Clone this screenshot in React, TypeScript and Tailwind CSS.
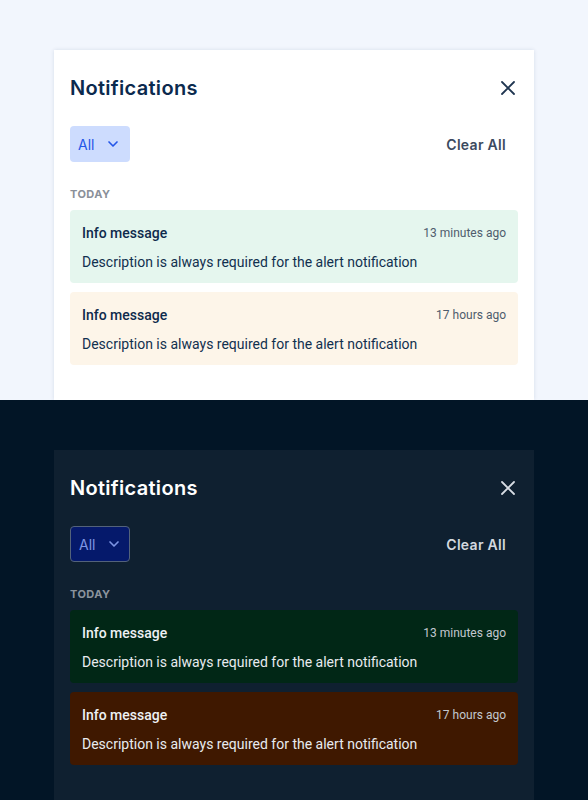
import { ChevronDown } from 'lucide-react';

type Theme = 'light' | 'dark';

const notifications = [
  { title: 'Info message', time: '13 minutes ago', tone: 'success' },
  { title: 'Info message', time: '17 hours ago', tone: 'warning' },
];

function CloseIcon() {
  return (
    <svg width="14" height="14" viewBox="0 0 14 14" fill="none" stroke="currentColor" strokeWidth="1.8" strokeLinecap="round">
      <path d="M1 1L13 13M13 1L1 13" />
    </svg>
  );
}

function Panel({ theme }: { theme: Theme }) {
  const dark = theme === 'dark';
  return (
    <div
      className={
        dark
          ? 'h-[350px] w-[480px] bg-[#0f2030] px-4'
          : 'h-[350px] w-[480px] bg-white px-4 shadow-[0_0_4px_rgba(15,40,80,0.12)]'
      }
    >
      {/* Header */}
      <div className="flex h-[76px] items-center justify-between">
        <h2
          className={
            dark
              ? 'text-[20px] font-semibold tracking-[0.3px] text-white'
              : 'text-[20px] font-semibold tracking-[0.3px] text-[#0b2a4e]'
          }
          style={{ fontFamily: 'Inter, "Open Sans", sans-serif' }}
        >
          Notifications
        </h2>
        <button className={dark ? 'mr-[3px] text-[#d8dde4]' : 'mr-[3px] text-[#1f3550]'}>
          <CloseIcon />
        </button>
      </div>

      {/* Filter row */}
      <div className="flex h-[36px] items-center justify-between">
        <button
          className={
            dark
              ? 'flex h-[36px] w-[60px] items-center gap-[11px] rounded-[4px] border border-[#53627a] bg-[#05196b] pl-[8px] text-[14px] text-[#7d95e4]'
              : 'flex h-[36px] w-[60px] items-center gap-[11px] rounded-[4px] bg-[#cddcfe] pl-[8px] text-[14px] text-[#2456e8]'
          }
          style={{ fontFamily: 'Inter, sans-serif' }}
        >
          <span>All</span>
          <ChevronDown className="h-4 w-4" strokeWidth={2.5} />
        </button>
        <button
          className={
            dark
              ? 'mr-[12px] text-[14px] font-semibold tracking-[0.3px] text-[#d3d8df]'
              : 'mr-[12px] text-[14px] font-semibold tracking-[0.3px] text-[#3b4a60]'
          }
          style={{ fontFamily: 'Inter, sans-serif' }}
        >
          Clear All
        </button>
      </div>

      {/* Section label */}
      <div
        className={
          dark
            ? 'mt-[24px] text-[11px] font-bold tracking-[0.4px] text-[#8b939d]'
            : 'mt-[24px] text-[11px] font-bold tracking-[0.4px] text-[#8a9099]'
        }
        style={{ fontFamily: 'Inter, sans-serif' }}
      >
        TODAY
      </div>

      {/* Notifications */}
      <div className="mt-[7px] flex flex-col gap-[9px]" style={{ fontFamily: 'Roboto, sans-serif' }}>
        {notifications.map((n, i) => {
          const bg =
            n.tone === 'success'
              ? dark
                ? 'bg-[#012716]'
                : 'bg-[#e5f6ee]'
              : dark
                ? 'bg-[#3f1800]'
                : 'bg-[#fdf5e9]';
          return (
            <div key={i} className={`rounded-[4px] px-3 pb-[11px] pt-[13px] ${bg}`}>
              <div className="flex items-center justify-between">
                <span
                  className={
                    dark
                      ? 'text-[14px] font-medium leading-5 text-[#eef1f4]'
                      : 'text-[14px] font-medium leading-5 text-[#0e2a4c]'
                  }
                >
                  {n.title}
                </span>
                <span
                  className={
                    dark ? 'text-[12px] leading-5 text-[#c3c8cf]' : 'text-[12px] leading-5 text-[#4f5c6d]'
                  }
                >
                  {n.time}
                </span>
              </div>
              <p
                className={
                  dark
                    ? 'mt-[9px] text-[14px] leading-5 text-[#e8ebef]'
                    : 'mt-[9px] text-[14px] leading-5 text-[#11304f]'
                }
              >
                Description is always required for the alert notification
              </p>
            </div>
          );
        })}
      </div>
    </div>
  );
}

export default function App() {
  return (
    <div className="w-[588px]">
      <section className="h-[400px] overflow-hidden bg-[#f2f6fd] pl-[54px] pt-[50px]">
        <Panel theme="light" />
      </section>
      <section className="h-[400px] overflow-hidden bg-[#021526] pl-[54px] pt-[50px]">
        <Panel theme="dark" />
      </section>
    </div>
  );
}
